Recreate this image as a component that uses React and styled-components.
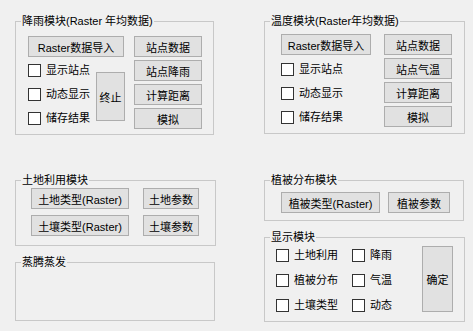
import React from "react";
import styled, { createGlobalStyle } from "styled-components";

const GlobalStyle = createGlobalStyle`
  *, *::before, *::after { box-sizing: border-box; }
  html, body { margin: 0; padding: 0; background: #f0f0f0; }
  body {
    font-family: "Liberation Sans", "Noto Sans CJK SC", sans-serif;
    font-size: 11px;
    color: #000;
  }
`;

const Page = styled.div`
  width: 473px;
  height: 331px;
  display: flex;
  gap: 48px;
  padding: 14px 0 0 15px;
  background: #f0f0f0;
`;

const Column = styled.div`
  width: ${(p) => p.$w}px;
  display: flex;
  flex-direction: column;
  flex: none;
`;

const Group = styled.fieldset`
  margin: ${(p) => p.$mt || 0}px 0 0 0;
  padding: 0;
  min-width: 0;
  width: ${(p) => p.$w}px;
  height: ${(p) => p.$h}px;
  border: 1px solid #c8c8c8;
`;

const Legend = styled.legend`
  margin-left: 5px;
  padding: 0 1px;
  line-height: 14px;
  font-size: 11px;
  white-space: nowrap;
`;

const Inner = styled.div`
  display: flex;
  flex-direction: ${(p) => p.$dir || "row"};
  gap: ${(p) => p.$gap || 0}px;
  padding: ${(p) => p.$pt || 0}px 0 0 ${(p) => p.$pl || 0}px;
`;

const Stack = styled.div`
  display: flex;
  flex-direction: column;
  gap: ${(p) => p.$gap || 0}px;
  margin-top: ${(p) => p.$mt || 0}px;
  width: ${(p) => (p.$w ? `${p.$w}px` : "auto")};
  flex: none;
`;

const Row = styled.div`
  display: flex;
  align-items: flex-start;
  gap: ${(p) => p.$gap || 0}px;
  margin-top: ${(p) => p.$mt || 0}px;
`;

const Button = styled.button`
  width: ${(p) => p.$w}px;
  height: ${(p) => p.$h || 21}px;
  margin: ${(p) => p.$mt || 0}px 0 0 0;
  padding: 0;
  flex: none;
  display: flex;
  align-items: center;
  justify-content: center;
  background: #e1e1e1;
  border: 1px solid #adadad;
  border-radius: 0;
  font: inherit;
  color: #000;
  white-space: nowrap;
`;

const Check = styled.label`
  display: flex;
  align-items: center;
  gap: 5px;
  height: 13px;
  line-height: 13px;
  white-space: nowrap;
`;

const Box = styled.span`
  width: 13px;
  height: 13px;
  flex: none;
  background: #fff;
  border: 1px solid #333;
`;

const CheckGrid = styled.div`
  display: grid;
  grid-template-columns: 76px 70px;
  row-gap: 12px;
  margin-top: 3px;
  flex: none;
`;

const CheckItem = ({ children }) => (
  <Check>
    <Box />
    <span>{children}</span>
  </Check>
);

export default function App() {
  return (
    <>
      <GlobalStyle />
      <Page>
        <Column $w={201}>
          <Group $w={199} $h={121}>
            <Legend>降雨模块(Raster 年均数据)</Legend>
            <Inner $pt={8} $pl={12} $gap={9}>
              <Stack>
                <Button $w={96}>Raster数据导入</Button>
                <Row $mt={7}>
                  <Stack $w={68} $gap={11}>
                    <CheckItem>显示站点</CheckItem>
                    <CheckItem>动态显示</CheckItem>
                    <CheckItem>储存结果</CheckItem>
                  </Stack>
                  <Button $w={29} $h={49} $mt={8}>终止</Button>
                </Row>
              </Stack>
              <Stack $gap={3}>
                <Button $w={68}>站点数据</Button>
                <Button $w={68}>站点降雨</Button>
                <Button $w={68}>计算距离</Button>
                <Button $w={68}>模拟</Button>
              </Stack>
            </Inner>
          </Group>

          <Group $w={201} $h={73} $mt={38}>
            <Legend>土地利用模块</Legend>
            <Inner $dir="column" $pt={1} $pl={15} $gap={6}>
              <Row $gap={14}>
                <Button $w={98}>土地类型(Raster)</Button>
                <Button $w={56}>土地参数</Button>
              </Row>
              <Row $gap={14}>
                <Button $w={98}>土壤类型(Raster)</Button>
                <Button $w={56}>土壤参数</Button>
              </Row>
            </Inner>
          </Group>

          <Group $w={200} $h={66} $mt={9}>
            <Legend>蒸腾蒸发</Legend>
          </Group>
        </Column>

        <Column $w={201}>
          <Group $w={201} $h={120}>
            <Legend>温度模块(Raster年均数据)</Legend>
            <Inner $pt={6} $pl={16} $gap={13}>
              <Stack>
                <Button $w={90}>Raster数据导入</Button>
                <Stack $gap={11} $mt={8}>
                  <CheckItem>显示站点</CheckItem>
                  <CheckItem>动态显示</CheckItem>
                  <CheckItem>储存结果</CheckItem>
                </Stack>
              </Stack>
              <Stack $gap={3}>
                <Button $w={68}>站点数据</Button>
                <Button $w={68}>站点气温</Button>
                <Button $w={68}>计算距离</Button>
                <Button $w={68}>模拟</Button>
              </Stack>
            </Inner>
          </Group>

          <Group $w={200} $h={48} $mt={39}>
            <Legend>植被分布模块</Legend>
            <Inner $pt={5} $pl={16} $gap={8}>
              <Button $w={99}>植被类型(Raster)</Button>
              <Button $w={62}>植被参数</Button>
            </Inner>
          </Group>

          <Group $w={201} $h={92} $mt={9}>
            <Legend>显示模块</Legend>
            <Inner $pt={2} $pl={11}>
              <CheckGrid>
                <CheckItem>土地利用</CheckItem>
                <CheckItem>降雨</CheckItem>
                <CheckItem>植被分布</CheckItem>
                <CheckItem>气温</CheckItem>
                <CheckItem>土壤类型</CheckItem>
                <CheckItem>动态</CheckItem>
              </CheckGrid>
              <Button $w={31} $h={66}>确定</Button>
            </Inner>
          </Group>
        </Column>
      </Page>
    </>
  );
}
